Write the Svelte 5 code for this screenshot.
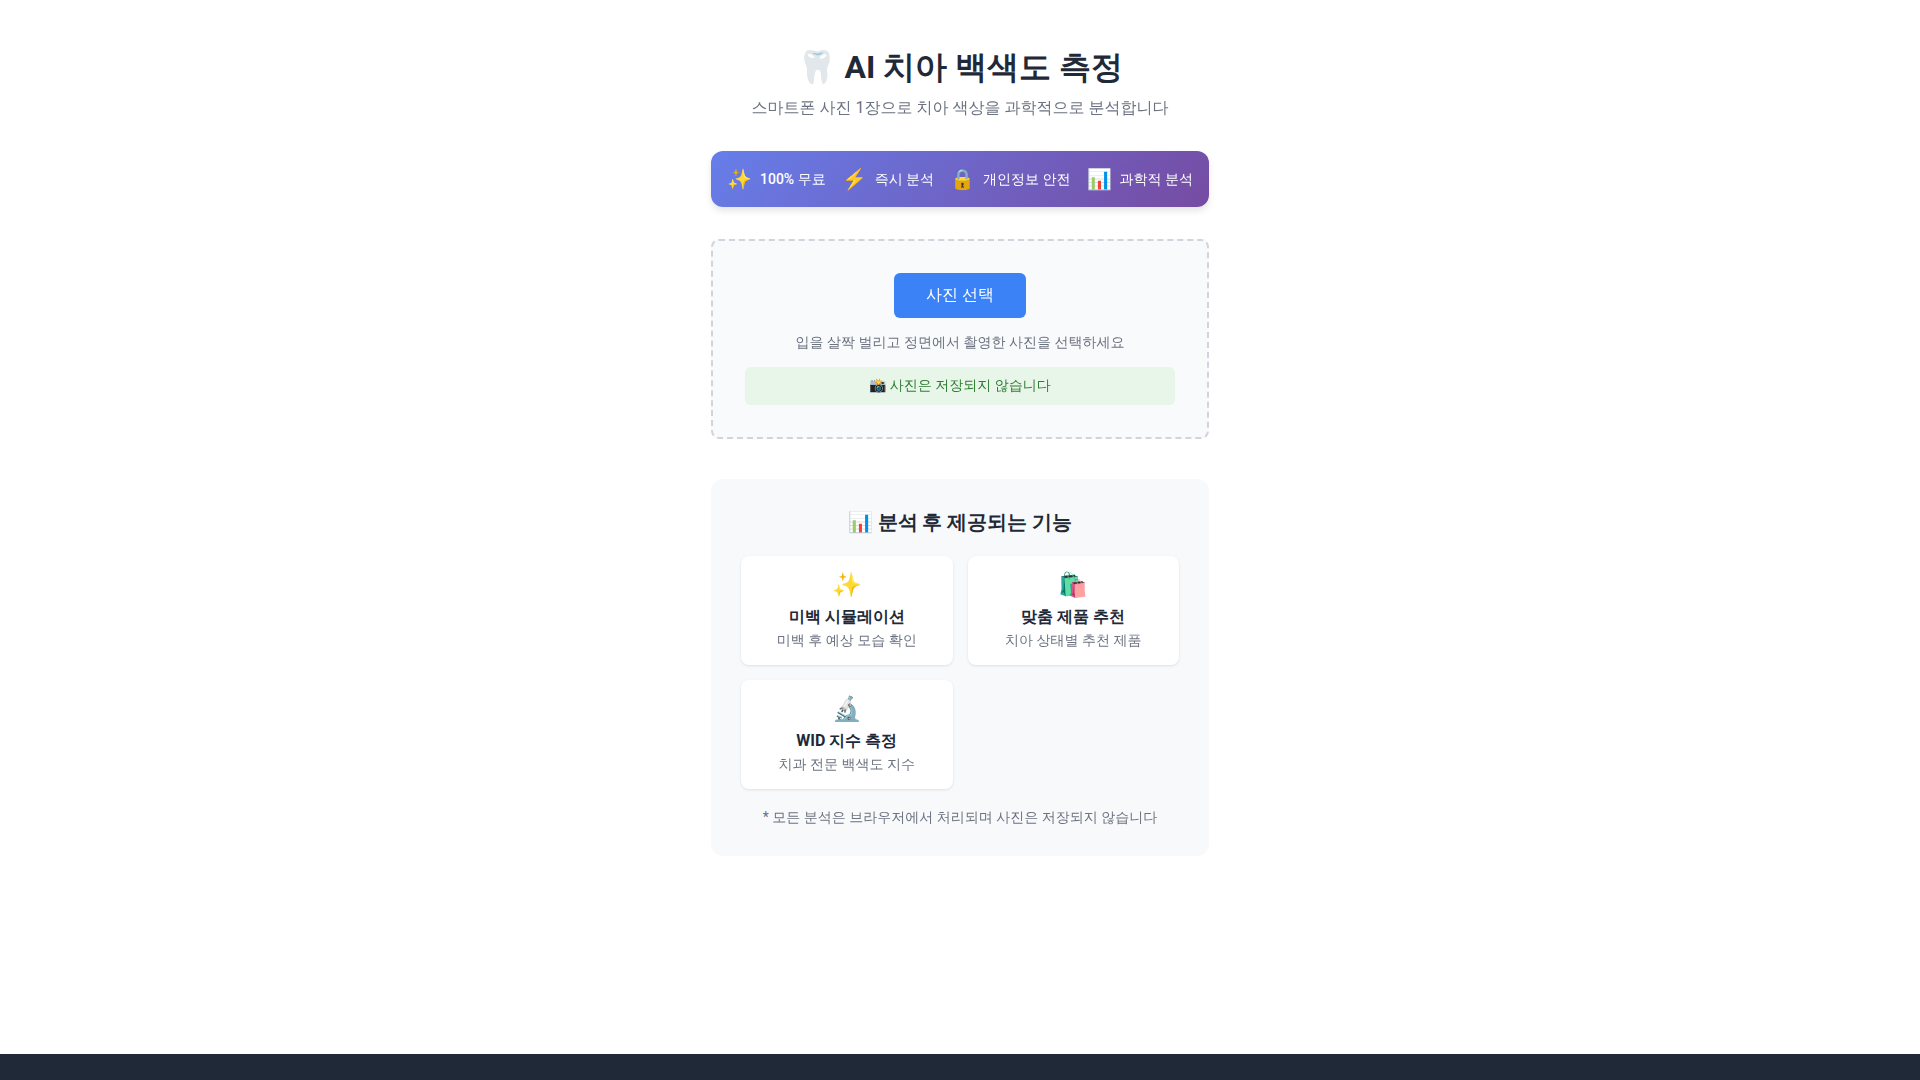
<script>
    const badges = [
        { icon: '✨', text: '100% 무료' },
        { icon: '⚡', text: '즉시 분석' },
        { icon: '🔒', text: '개인정보 안전' },
        { icon: '📊', text: '과학적 분석' }
    ];

    const features = [
        { icon: '✨', title: '미백 시뮬레이션', desc: '미백 후 예상 모습 확인' },
        { icon: '🛍️', title: '맞춤 제품 추천', desc: '치아 상태별 추천 제품' },
        { icon: '🔬', title: 'WID 지수 측정', desc: '치과 전문 백색도 지수' }
    ];

    let fileInput;
</script>

<main lang="ko">
    <div class="container">
        <header>
            <h1>🦷 AI 치아 백색도 측정</h1>
            <p>스마트폰 사진 1장으로 치아 색상을 과학적으로 분석합니다</p>
        </header>

        <div class="badges">
            {#each badges as badge}
                <div class="badge">
                    <span class="badge-icon">{badge.icon}</span>
                    <span class="badge-text">{badge.text}</span>
                </div>
            {/each}
        </div>

        <section class="upload">
            <input type="file" accept="image/*" hidden aria-label="사진 선택" bind:this={fileInput} />
            <button type="button" onclick={() => fileInput.click()}>사진 선택</button>
            <p class="hint">입을 살짝 벌리고 정면에서 촬영한 사진을 선택하세요</p>
            <p class="privacy">📸 사진은 저장되지 않습니다</p>
        </section>

        <section class="preview">
            <h2>📊 분석 후 제공되는 기능</h2>
            <div class="feature-grid">
                {#each features as feature}
                    <div class="feature">
                        <div class="feature-icon">{feature.icon}</div>
                        <h3>{feature.title}</h3>
                        <p>{feature.desc}</p>
                    </div>
                {/each}
            </div>
            <p class="note">* 모든 분석은 브라우저에서 처리되며 사진은 저장되지 않습니다</p>
        </section>
    </div>
</main>

<footer></footer>

<style>
    :global(body) {
        margin: 0;
        background: white;
        color: #1f2937;
        font-family: Roboto, "WenQuanYi Zen Hei", "Noto Sans CJK KR", sans-serif;
        line-height: 24px;
    }

    :global(#app) {
        display: flex;
        flex-direction: column;
        min-height: 100vh;
    }

    main {
        flex: 1;
        padding: 40px 20px;
    }

    .container {
        max-width: 498px;
        margin: 0 auto;
    }

    header {
        text-align: center;
        margin-bottom: 30px;
    }

    h1, h2, h3, p {
        margin: 0;
    }

    /* Zen Hei has no bold face */
    h1, h2, h3 {
        font-family: Roboto, sans-serif;
    }

    h1 {
        font-size: 32px;
        line-height: 55px;
    }

    header p {
        color: #6b7280;
        font-size: 16px;
        line-height: 26px;
    }

    .badges {
        display: flex;
        flex-wrap: wrap;
        justify-content: space-between;
        padding: 16px;
        margin-bottom: 32px;
        color: white;
        background: linear-gradient(135deg, #667eea 0%, #764ba2 100%);
        border-radius: 12px;
        box-shadow: 0 4px 6px rgba(0, 0, 0, 0.1);
    }

    .badge {
        display: flex;
        align-items: center;
        gap: 8px;
    }

    .badge-icon {
        font-size: 20px;
    }

    .badge-text {
        font-size: 14px;
        font-weight: 500;
        line-height: 17px;
    }

    .upload {
        padding: 32px;
        margin-bottom: 40px;
        text-align: center;
        background: #f9fafb;
        border: 2px dashed #d1d5db;
        border-radius: 8px;
    }

    button {
        padding: 11px 32px 13px;
        color: white;
        background: #3b82f6;
        border: none;
        border-radius: 6px;
        font: inherit;
        font-size: 16px;
        line-height: 21px;
        cursor: pointer;
    }

    .hint {
        margin: 16px 0;
        color: #6b7280;
        font-size: 14px;
        line-height: 17px;
    }

    .privacy {
        padding: 10px 10px 11px;
        color: #2e7d32;
        background: #e8f5e9;
        border-radius: 6px;
        font-size: 14px;
        line-height: 17px;
    }

    .preview {
        padding: 30px;
        text-align: center;
        background: #f8f9fa;
        border-radius: 12px;
    }

    h2 {
        font-size: 20px;
        line-height: 27px;
        margin-bottom: 20px;
    }

    .feature-grid {
        display: grid;
        grid-template-columns: repeat(2, 1fr);
        gap: 15px;
        margin-bottom: 20px;
    }

    .feature {
        padding: 15px 15px 16px;
        background: white;
        border-radius: 8px;
        box-shadow: 0 1px 3px rgba(0, 0, 0, 0.1);
    }

    .feature-icon {
        font-size: 24px;
        line-height: 28px;
        margin-bottom: 8px;
    }

    h3 {
        font-size: 16px;
        line-height: 20px;
        margin-bottom: 5px;
    }

    .feature p,
    .note {
        color: #6b7280;
        font-size: 14px;
        line-height: 17px;
    }

    footer {
        height: 26px;
        background: #1f2937;
    }
</style>
